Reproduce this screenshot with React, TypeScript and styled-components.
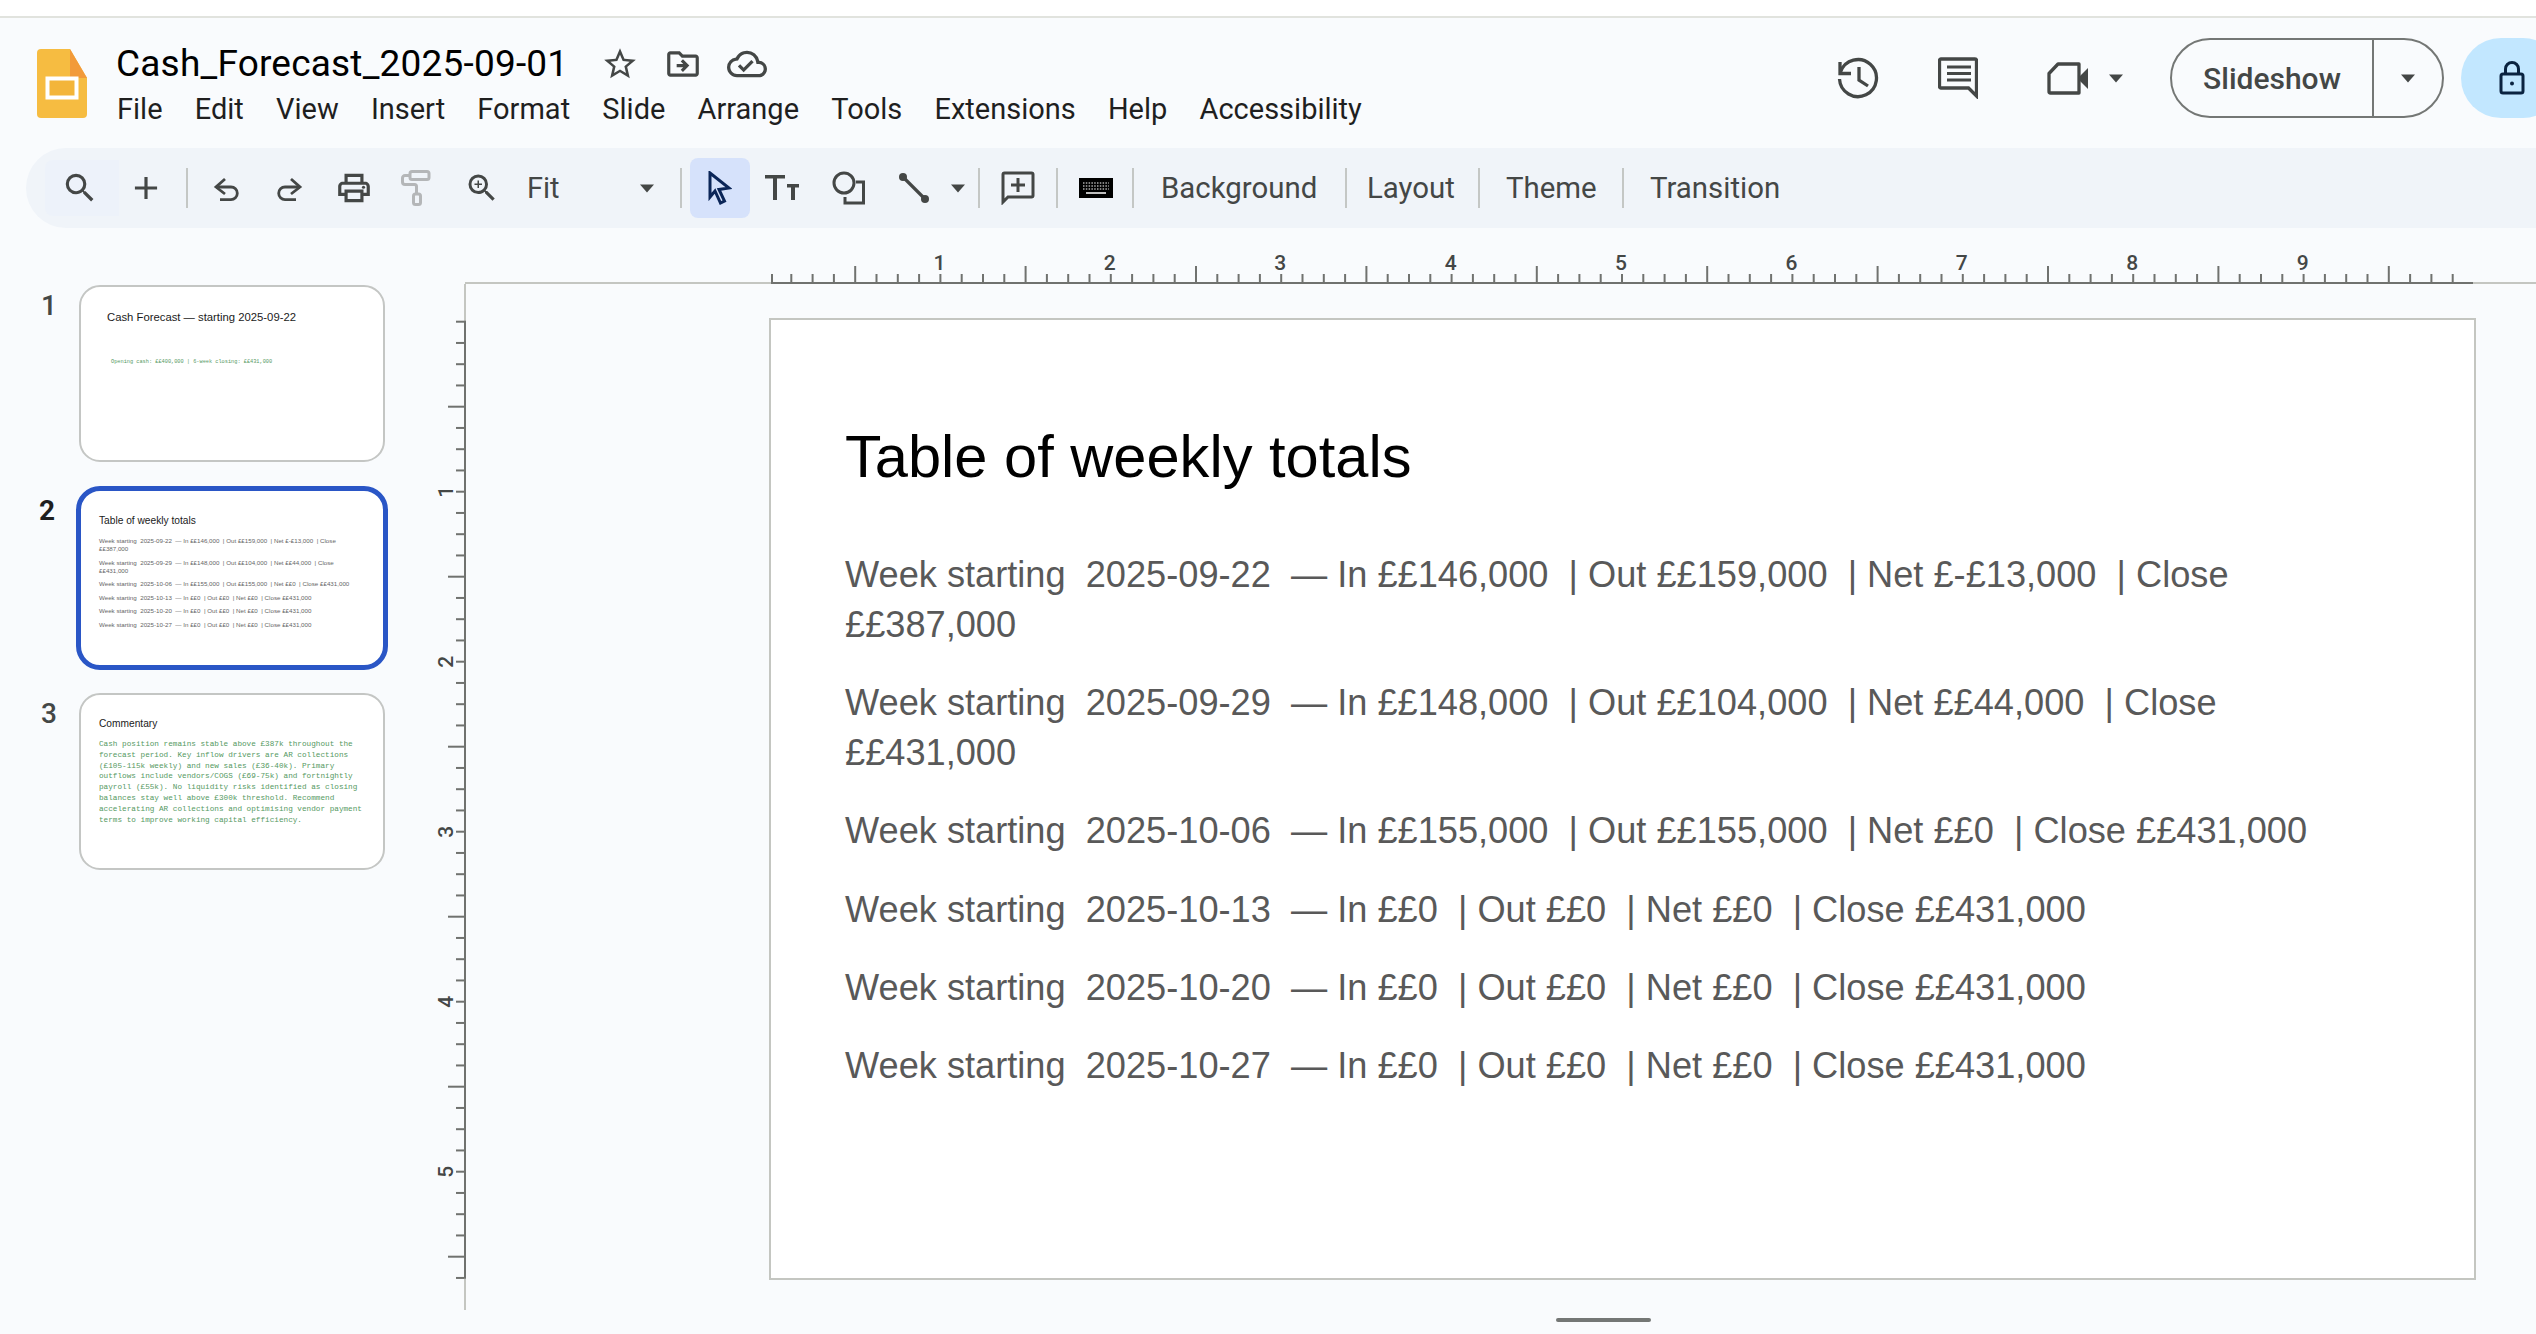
import React from 'react';
import styled, { createGlobalStyle } from 'styled-components';
import {
  MdAdd,
  MdOutlineCloudDone,
  MdOutlineDriveFileMove,
  MdOutlinePrint,
  MdOutlineZoomIn,
  MdSearch,
  MdStarBorder,
} from 'react-icons/md';

const GlobalStyle = createGlobalStyle`
  html, body {
    margin: 0;
    padding: 0;
    width: 2536px;
    height: 1334px;
    overflow: hidden;
    background: #f9fbfd;
    font-family: Roboto, "Liberation Sans", sans-serif;
  }
  * { box-sizing: border-box; }
`;

const Page = styled.div`
  width: 2536px;
  height: 1334px;
  display: flex;
  flex-direction: column;
  overflow: hidden;
  background: #f9fbfd;
`;

const TopStrip = styled.div`
  height: 18px;
  flex: none;
  background: #fff;
  border-bottom: 2px solid #e1e3de;
`;

const Header = styled.header`
  height: 130px;
  flex: none;
  display: flex;
  padding-left: 37px;
`;

const LogoWrap = styled.div`
  width: 50px;
  height: 69px;
  margin-top: 31px;
  flex: none;
`;

const TitleBlock = styled.div`
  margin-left: 29px;
  padding-top: 25px;
`;

const TitleRow = styled.div`
  display: flex;
  align-items: center;
  height: 42px;
`;

const DocName = styled.div`
  font-size: 37px;
  line-height: 42px;
  width: 450px;
  white-space: nowrap;
  color: #000;
  letter-spacing: 0.2px;
`;

const TitleIcons = styled.div`
  display: flex;
  align-items: center;
  margin-left: 35px;
  gap: 25px;
  color: #444746;
  svg { display: block; }
`;

const MenuBar = styled.nav`
  display: flex;
  gap: 32.2px;
  margin-top: 7px;
  padding-left: 1px;
`;

const MenuItem = styled.span`
  font-size: 29px;
  line-height: 34px;
  color: #1f1f1f;
`;

const HeaderActions = styled.div`
  margin-left: auto;
  margin-right: -27px;
  padding-top: 20px;
  height: 100px;
  display: flex;
  align-items: center;
`;

const ActionIcon = styled.div<{ $w: number }>`
  width: ${(p) => p.$w}px;
  display: flex;
  align-items: center;
  justify-content: center;
  gap: 19px;
`;

const SlideshowGroup = styled.div`
  width: 274px;
  height: 80px;
  margin-left: 8px;
  display: flex;
  border: 2px solid #747775;
  border-radius: 40px;
  flex: none;
`;

const SlideshowLabel = styled.div`
  width: 202px;
  border-right: 2px solid #747775;
  font-size: 30px;
  font-weight: 500;
  color: #444746;
  display: flex;
  align-items: center;
  justify-content: center;
`;

const SlideshowArrow = styled.div`
  flex: 1;
  display: flex;
  align-items: center;
  justify-content: center;
`;

const ShareButton = styled.div`
  width: 102px;
  height: 80px;
  margin-left: 17px;
  border-radius: 40px;
  background: #c2e7ff;
  display: flex;
  align-items: center;
  justify-content: center;
  flex: none;
`;

const Toolbar = styled.div`
  height: 80px;
  flex: none;
  margin-left: 26px;
  padding-left: 19px;
  display: flex;
  align-items: center;
  background: #f0f4f9;
  border-radius: 40px 0 0 40px;
`;

const ToolButton = styled.div<{ $w: number; $active?: boolean; $soft?: boolean }>`
  width: ${(p) => p.$w}px;
  height: ${(p) => (p.$active ? '60px' : p.$soft ? '56px' : '40px')};
  flex: none;
  display: flex;
  align-items: center;
  justify-content: center;
  color: #444746;
  border-radius: ${(p) => (p.$active ? '8px' : p.$soft ? '8px 0 0 8px' : '0')};
  background: ${(p) => (p.$active ? '#d6e2fb' : p.$soft ? '#edf2fa' : 'transparent')};
  padding-right: ${(p) => (p.$soft ? '5px' : '0')};
  svg { display: block; }
`;

const ToolSep = styled.div<{ $l: number; $r: number }>`
  width: 2px;
  height: 40px;
  flex: none;
  margin: 0 ${(p) => p.$r}px 0 ${(p) => p.$l}px;
  background: #c4c7c5;
`;

const ZoomValue = styled.div`
  width: 112px;
  padding-left: 9px;
  flex: none;
  font-size: 29px;
  color: #444746;
`;

const ToolText = styled.div<{ $w: number; $pad: number }>`
  width: ${(p) => p.$w}px;
  padding-left: ${(p) => p.$pad}px;
  flex: none;
  font-size: 29.4px;
  color: #444746;
  white-space: nowrap;
`;

const Workspace = styled.div`
  flex: 1;
  display: grid;
  grid-template-columns: 407px 59px 1fr;
  grid-template-rows: 56px 1fr;
  min-height: 0;
`;

const Filmstrip = styled.aside`
  grid-column: 1;
  grid-row: 1 / 3;
  padding-top: 57px;
  display: flex;
  flex-direction: column;
  gap: 27px;
`;

const FilmItem = styled.div`
  display: flex;
  align-items: flex-start;
`;

const FilmNumber = styled.div<{ $active?: boolean }>`
  width: ${(p) => (p.$active ? '55px' : '57px')};
  margin-right: ${(p) => (p.$active ? '0' : '-2px')};
  text-align: right;
  padding-top: ${(p) => (p.$active ? '5px' : '4px')};
  font-size: 28px;
  line-height: 34px;
  font-weight: ${(p) => (p.$active ? 700 : 500)};
  color: ${(p) => (p.$active ? '#1f1f1f' : '#444746')};
`;

const Thumb = styled.div<{ $active?: boolean }>`
  width: ${(p) => (p.$active ? '312px' : '306px')};
  height: ${(p) => (p.$active ? '184px' : '177px')};
  margin: ${(p) => (p.$active ? '-3px 0 -4px 21px' : '0 0 0 24px')};
  background: #fff;
  border: ${(p) => (p.$active ? '5px solid #2a56c6' : '2px solid #c4c6c4')};
  border-radius: ${(p) => (p.$active ? '24px' : '21px')};
  font-family: "Liberation Sans", Arial, sans-serif;
  overflow: hidden;
  padding: 22px 0 0 18px;
`;

const ThumbTitle = styled.div<{ $size: number; $inset?: number; $lift?: number }>`
  font-size: ${(p) => p.$size}px;
  line-height: 16px;
  color: #1a1a1a;
  white-space: nowrap;
  margin-left: ${(p) => p.$inset ?? 0}px;
  margin-top: ${(p) => -(p.$lift ?? 0)}px;
`;

const ThumbMono = styled.div<{ $size: number; $line: number; $top: number; $inset?: number }>`
  font-family: "Liberation Mono", "DejaVu Sans Mono", monospace;
  font-size: ${(p) => p.$size}px;
  line-height: ${(p) => p.$line}px;
  color: #55995f;
  width: 272px;
  margin-top: ${(p) => p.$top}px;
  margin-left: ${(p) => p.$inset ?? 0}px;
  white-space: pre-wrap;
`;

const ThumbRows = styled.div`
  margin-top: 8px;
  width: 255px;
  display: flex;
  flex-direction: column;
  gap: 5.5px;
`;

const ThumbRow = styled.div`
  font-size: 6.2px;
  line-height: 8px;
  color: #666;
  white-space: pre-wrap;
`;

const RulerSvg = styled.svg<{ $col: string; $row: number }>`
  grid-column: ${(p) => p.$col};
  grid-row: ${(p) => p.$row};
  display: block;
  overflow: visible;
`;

const RulerLabel = styled.text`
  font-family: Roboto, sans-serif;
  font-size: 21px;
  font-weight: 500;
  fill: #444746;
`;

const Stage = styled.main`
  grid-column: 3;
  grid-row: 2;
  padding-left: 303px;
  padding-top: 34px;
`;

const Slide = styled.section`
  width: 1707px;
  height: 962px;
  background: #fff;
  border: 2px solid #c4c6c1;
  padding: 104px 0 0 74px;
  font-family: "Liberation Sans", Arial, sans-serif;
`;

const SlideTitle = styled.h1`
  margin: 0 0 60px;
  font-size: 59.6px;
  line-height: 66px;
  font-weight: 400;
  color: #000;
`;

const SlideRow = styled.p`
  margin: 0 0 28.2px;
  width: 1500px;
  font-size: 36.2px;
  line-height: 50px;
  color: #595959;
  white-space: pre-wrap;
`;

const RowWord = styled.span`
  white-space: nowrap;
`;

const ResizeHandle = styled.div`
  width: 95px;
  height: 4px;
  margin: 38px 0 0 787px;
  border-radius: 2px;
  background: #747775;
`;

const Caret = ({ color = '#444746' }: { color?: string }) => (
  <svg width="16" height="9" viewBox="0 0 16 9">
    <path d="M1 0.5h14L8 8.5z" fill={color} />
  </svg>
);

const SlidesLogo = () => (
  <svg width="50" height="69" viewBox="0 0 50 69">
    <path d="M4 0h29l17 29v36a4 4 0 0 1-4 4H4a4 4 0 0 1-4-4V4a4 4 0 0 1 4-4z" fill="#f6bc41" />
    <path d="M33 0l17 29H33z" fill="#f29a3a" />
    <rect x="10.5" y="29.5" width="29" height="19" fill="#f3b53a" stroke="#fff" strokeWidth="4" />
  </svg>
);

const UndoIcon = ({ flip }: { flip?: boolean }) => (
  <svg width="36" height="40" viewBox="0 0 36 40">
    <g
      fill="none"
      stroke="#444746"
      strokeWidth="2.8"
      transform={flip ? 'translate(36 0) scale(-1 1)' : undefined}
    >
      <path d="M8 19h15a6.2 6.2 0 0 1 0 12.6H12" />
      <path d="M17 11l-9 8 9 7" />
    </g>
  </svg>
);

const PaintIcon = () => (
  <svg width="30" height="36" viewBox="0 0 30 36" fill="none" stroke="#b4b6b8" strokeWidth="3">
    <rect x="9" y="1.5" width="19" height="8" rx="2" />
    <path d="M9 5.5H4a2.5 2.5 0 0 0-2.5 2.5v4a2.5 2.5 0 0 0 2.5 2.5h9.5a2 2 0 0 1 2 2V24" />
    <rect x="12.5" y="24" width="7" height="10.5" rx="2" />
  </svg>
);

const CursorIcon = () => (
  <svg width="24" height="34" viewBox="0 0 24 34">
    <path
      d="M2 2l19 15-10 1.5 5.5 11.5-4 2-5.500-12L2 26z"
      fill="#d6e2fb"
      stroke="#0b2658"
      strokeWidth="3"
    />
  </svg>
);

const TextSizeIcon = () => (
  <svg width="34" height="26" viewBox="0 0 34 26" fill="#444746">
    <path d="M0 0h20v3.6h-8V25H8V3.6H0z" />
    <path d="M22 9h12v3.4h-4V25h-4V12.4h-4z" />
  </svg>
);

const ShapeIcon = () => (
  <svg width="34" height="34" viewBox="0 0 34 34" fill="none" stroke="#444746" strokeWidth="3">
    <circle cx="12" cy="12" r="10" />
    <path d="M24 11h7.5v21H13v-6" />
  </svg>
);

const LineIcon = () => (
  <svg width="30" height="30" viewBox="0 0 30 30" fill="#444746">
    <path d="M4 4l22 22" stroke="#444746" strokeWidth="3.2" />
    <circle cx="4" cy="4" r="4" />
    <circle cx="26" cy="26" r="4" />
  </svg>
);

const AddCommentIcon = () => (
  <svg width="34" height="34" viewBox="0 0 34 34" fill="none" stroke="#444746" strokeWidth="3">
    <path d="M2 31V3.5A1.5 1.5 0 0 1 3.5 2h27A1.5 1.5 0 0 1 32 3.5v21a1.5 1.5 0 0 1-1.5 1.5H7z" />
    <path d="M17 7v14M10 14h14" />
  </svg>
);

const KeyboardIcon = () => (
  <svg width="34" height="20" viewBox="0 0 34 20">
    <rect width="34" height="20" fill="#000" />
    <g stroke="#fff" strokeWidth="1.1" strokeDasharray="1.5 1.3">
      <path d="M4 5h26M4 8h26M4 11h26" />
    </g>
    <path d="M7 15h20" stroke="#fff" strokeWidth="1.5" />
  </svg>
);

const HistoryIcon = () => (
  <svg width="42" height="42" viewBox="0 0 42 42" fill="none" stroke="#444746" strokeWidth="3.3">
    <path d="M3.5 15a18.5 18.5 0 1 1-1 7" />
    <path d="M3 5v11.5h11" />
    <path d="M22 10v13l9 6" />
  </svg>
);

const CommentsIcon = () => (
  <svg width="40" height="42" viewBox="0 0 40 42">
    <path
      d="M3 2h34a1.5 1.5 0 0 1 1.5 1.5V39l-8-8H3a1.5 1.5 0 0 1-1.5-1.5v-26A1.5 1.5 0 0 1 3 2z"
      fill="none"
      stroke="#444746"
      strokeWidth="3.3"
    />
    <path d="M9 10h24M9 16.5h24M9 23h24" stroke="#444746" strokeWidth="3.2" />
  </svg>
);

const VideoIcon = () => (
  <svg width="42" height="34" viewBox="0 0 42 34">
    <path
      d="M2 12.5L11 3h21v29H3.5A1.5 1.5 0 0 1 2 30.5z"
      fill="none"
      stroke="#444746"
      strokeWidth="3.3"
      strokeLinejoin="round"
    />
    <path d="M33 15l8-8v21l-8-8z" fill="#444746" />
  </svg>
);

const LockIcon = () => (
  <svg width="26" height="34" viewBox="0 0 26 34" fill="none" stroke="#0a2340" strokeWidth="3">
    <path d="M6.5 13V8a6.5 6.5 0 0 1 13 0v5" />
    <rect x="2" y="13" width="22" height="19" rx="2" />
    <circle cx="13" cy="22.5" r="2" fill="#0a2340" stroke="none" />
  </svg>
);

const INCH = 170.4;
const EIGHTH = INCH / 8;

const HorizontalRuler = () => {
  const origin = 362;
  const ticks = Array.from({ length: 80 }, (_, i) => i);
  return (
    <RulerSvg $col="2 / 4" $row={1} width="2129" height="56" viewBox="0 0 2129 56">
      <rect x="58" y="54" width="2071" height="2" fill="#c4c6c1" />
      <rect x={origin + 2} y="54" width="1702" height="2" fill="#70726f" />
      {ticks.map((i) => {
        const x = Math.max(origin + i * EIGHTH, origin + 2);
        const long = i % 8 === 4;
        return <rect key={i} x={x} y={long ? 38 : 46} width="2" height={long ? 16 : 8} fill="#70726f" />;
      })}
      {[1, 2, 3, 4, 5, 6, 7, 8, 9].map((n) => (
        <RulerLabel key={n} x={origin + n * INCH} y="42" textAnchor="middle">
          {n}
        </RulerLabel>
      ))}
    </RulerSvg>
  );
};

const VerticalRuler = () => {
  const origin = 36.7;
  const ticks = Array.from({ length: 46 }, (_, i) => i);
  return (
    <RulerSvg $col="2" $row={2} width="59" height="1026" viewBox="0 0 59 1026">
      <rect x="57" y="0" width="2" height="1026" fill="#c4c6c1" />
      <rect x="57" y={origin} width="2" height="958" fill="#70726f" />
      {ticks.map((i) => {
        const y = origin + i * 21.25;
        const long = i % 8 === 4;
        return <rect key={i} x={long ? 41 : 49} y={y} width={long ? 16 : 8} height="2" fill="#70726f" />;
      })}
      {[1, 2, 3, 4, 5].map((n) => (
        <RulerLabel
          key={n}
          textAnchor="middle"
          transform={`translate(46 ${origin + n * 170 + 1}) rotate(-90)`}
        >
          {n}
        </RulerLabel>
      ))}
    </RulerSvg>
  );
};

const MENU = ['File', 'Edit', 'View', 'Insert', 'Format', 'Slide', 'Arrange', 'Tools', 'Extensions', 'Help', 'Accessibility'];

const WEEK_ROWS = [
  'Week starting  2025-09-22  — In ££146,000  | Out ££159,000  | Net £-£13,000  | Close ££387,000',
  'Week starting  2025-09-29  — In ££148,000  | Out ££104,000  | Net ££44,000  | Close ££431,000',
  'Week starting  2025-10-06  — In ££155,000  | Out ££155,000  | Net ££0  | Close ££431,000',
  'Week starting  2025-10-13  — In ££0  | Out ££0  | Net ££0  | Close ££431,000',
  'Week starting  2025-10-20  — In ££0  | Out ££0  | Net ££0  | Close ££431,000',
  'Week starting  2025-10-27  — In ££0  | Out ££0  | Net ££0  | Close ££431,000',
];

const COMMENTARY =
  'Cash position remains stable above £387k throughout the forecast period. Key inflow drivers are AR collections (£105-115k weekly) and new sales (£36-40k). Primary outflows include vendors/COGS (£69-75k) and fortnightly payroll (£55k). No liquidity risks identified as closing balances stay well above £300k threshold. Recommend accelerating AR collections and optimising vendor payment terms to improve working capital efficiency.';

// keeps "££387,000" on one line, the browser would otherwise break between the two signs
const rowWords = (row: string) =>
  row.split(/( +)/).map((part, i) => (part.trim() ? <RowWord key={i}>{part}</RowWord> : part));

export default function App() {
  return (
    <Page>
      <GlobalStyle />
      <TopStrip />
      <Header>
        <LogoWrap>
          <SlidesLogo />
        </LogoWrap>
        <TitleBlock>
          <TitleRow>
            <DocName>Cash_Forecast_2025-09-01</DocName>
            <TitleIcons>
              <MdStarBorder size={38} />
              <MdOutlineDriveFileMove size={38} />
              <MdOutlineCloudDone size={40} />
            </TitleIcons>
          </TitleRow>
          <MenuBar>
            {MENU.map((m) => (
              <MenuItem key={m}>{m}</MenuItem>
            ))}
          </MenuBar>
        </TitleBlock>
        <HeaderActions>
          <ActionIcon $w={100}>
            <HistoryIcon />
          </ActionIcon>
          <ActionIcon $w={100}>
            <CommentsIcon />
          </ActionIcon>
          <ActionIcon $w={154}>
            <VideoIcon />
            <Caret />
          </ActionIcon>
          <SlideshowGroup>
            <SlideshowLabel>Slideshow</SlideshowLabel>
            <SlideshowArrow>
              <Caret />
            </SlideshowArrow>
          </SlideshowGroup>
          <ShareButton>
            <LockIcon />
          </ShareButton>
        </HeaderActions>
      </Header>
      <Toolbar>
        <ToolButton $w={74} $soft>
          <MdSearch size={38} />
        </ToolButton>
        <ToolButton $w={54}>
          <MdAdd size={38} />
        </ToolButton>
        <ToolSep $l={13} $r={6} />
        <ToolButton $w={64}>
          <UndoIcon />
        </ToolButton>
        <ToolButton $w={64}>
          <UndoIcon flip />
        </ToolButton>
        <ToolButton $w={64}>
          <MdOutlinePrint size={38} />
        </ToolButton>
        <ToolButton $w={60}>
          <PaintIcon />
        </ToolButton>
        <ToolButton $w={72}>
          <MdOutlineZoomIn size={36} />
        </ToolButton>
        <ZoomValue>Fit</ZoomValue>
        <ToolButton $w={34}>
          <Caret />
        </ToolButton>
        <ToolSep $l={16} $r={8} />
        <ToolButton $w={60} $active>
          <CursorIcon />
        </ToolButton>
        <ToolButton $w={64}>
          <TextSizeIcon />
        </ToolButton>
        <ToolButton $w={70}>
          <ShapeIcon />
        </ToolButton>
        <ToolButton $w={60}>
          <LineIcon />
        </ToolButton>
        <ToolButton $w={28}>
          <Caret />
        </ToolButton>
        <ToolSep $l={6} $r={6} />
        <ToolButton $w={64}>
          <AddCommentIcon />
        </ToolButton>
        <ToolSep $l={6} $r={6} />
        <ToolButton $w={64}>
          <KeyboardIcon />
        </ToolButton>
        <ToolSep $l={4} $r={0} />
        <ToolText $w={211} $pad={27}>Background</ToolText>
        <ToolSep $l={0} $r={0} />
        <ToolText $w={131} $pad={20}>Layout</ToolText>
        <ToolSep $l={0} $r={0} />
        <ToolText $w={142} $pad={26}>Theme</ToolText>
        <ToolSep $l={0} $r={0} />
        <ToolText $w={200} $pad={26}>Transition</ToolText>
      </Toolbar>
      <Workspace>
        <Filmstrip>
          <FilmItem>
            <FilmNumber>1</FilmNumber>
            <Thumb>
              <ThumbTitle $size={11.3} $inset={8}>Cash Forecast — starting 2025-09-22</ThumbTitle>
              <ThumbMono $size={5.27} $line={8} $top={33} $inset={12}>
                Opening cash: ££400,000 | 6-week closing: ££431,000
              </ThumbMono>
            </Thumb>
          </FilmItem>
          <FilmItem>
            <FilmNumber $active>2</FilmNumber>
            <Thumb $active>
              <ThumbTitle $size={10.2}>Table of weekly totals</ThumbTitle>
              <ThumbRows>
                {WEEK_ROWS.map((r) => (
                  <ThumbRow key={r}>{rowWords(r)}</ThumbRow>
                ))}
              </ThumbRows>
            </Thumb>
          </FilmItem>
          <FilmItem>
            <FilmNumber>3</FilmNumber>
            <Thumb>
              <ThumbTitle $size={10.2} $lift={1}>Commentary</ThumbTitle>
              <ThumbMono $size={7.7} $line={10.8} $top={7}>
                {COMMENTARY}
              </ThumbMono>
            </Thumb>
          </FilmItem>
        </Filmstrip>
        <HorizontalRuler />
        <VerticalRuler />
        <Stage>
          <Slide>
            <SlideTitle>Table of weekly totals</SlideTitle>
            {WEEK_ROWS.map((r) => (
              <SlideRow key={r}>{rowWords(r)}</SlideRow>
            ))}
          </Slide>
          <ResizeHandle />
        </Stage>
      </Workspace>
    </Page>
  );
}
